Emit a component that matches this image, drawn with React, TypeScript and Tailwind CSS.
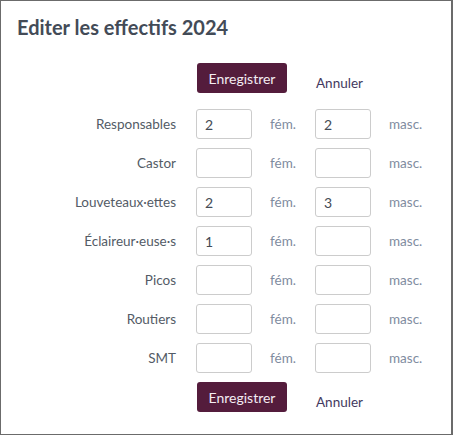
import { useState } from 'react';

type Row = { label: string; fem: string; masc: string };

const initialRows: Row[] = [
  { label: 'Responsables', fem: '2', masc: '2' },
  { label: 'Castor', fem: '', masc: '' },
  { label: 'Louveteaux·ettes', fem: '2', masc: '3' },
  { label: 'Éclaireur·euse·s', fem: '1', masc: '' },
  { label: 'Picos', fem: '', masc: '' },
  { label: 'Routiers', fem: '', masc: '' },
  { label: 'SMT', fem: '', masc: '' },
];

const font = { fontFamily: '"Lato", "Open Sans", sans-serif' };

const Actions = () => (
  <div className="flex items-start pl-[196px]">
    <button className="h-[30px] w-[90px] rounded-[3px] bg-[#541c3c] text-[14px] text-[#f3ecf2]">
      Enregistrer
    </button>
    <a href="#" className="ml-[29px] mt-[10px] text-[13.5px] leading-[20px] text-[#43395e]">
      Annuler
    </a>
  </div>
);

export default function App() {
  const [rows, setRows] = useState<Row[]>(initialRows);

  const update = (i: number, key: 'fem' | 'masc', value: string) => {
    setRows(rows.map((r, j) => (j === i ? { ...r, [key]: value } : r)));
  };

  return (
    <div style={font} className="h-[435px] w-[453px] border border-r-2 border-[#6b6b6b] bg-white">
      <h1 className="pl-[16px] pt-[13px] text-[20px] font-bold leading-[26px] text-[#434b57]">
        Editer les effectifs 2024
      </h1>
      <div className="mt-[23px]">
        <Actions />
      </div>
      <div className="mt-[16px] flex flex-col gap-[9px]">
        {rows.map((r, i) => (
          <div key={r.label} className="flex h-[30px] items-center">
            <span className="w-[175px] text-right text-[13.5px] text-[#535b66]">{r.label}</span>
            <input
              value={r.fem}
              onChange={(e) => update(i, 'fem', e.target.value)}
              className="ml-[20px] h-[30px] w-[56px] rounded-[3px] border border-[#cccccc] px-[8px] text-[14px] text-[#444b55] outline-none"
            />
            <span className="ml-[18px] w-[45px] text-[13.5px] text-[#7f8ca0]">fém.</span>
            <input
              value={r.masc}
              onChange={(e) => update(i, 'masc', e.target.value)}
              className="h-[30px] w-[56px] rounded-[3px] border border-[#cccccc] px-[8px] text-[14px] text-[#444b55] outline-none"
            />
            <span className="ml-[18px] text-[13.5px] text-[#7f8ca0]">masc.</span>
          </div>
        ))}
      </div>
      <div className="mt-[9px]">
        <Actions />
      </div>
    </div>
  );
}
